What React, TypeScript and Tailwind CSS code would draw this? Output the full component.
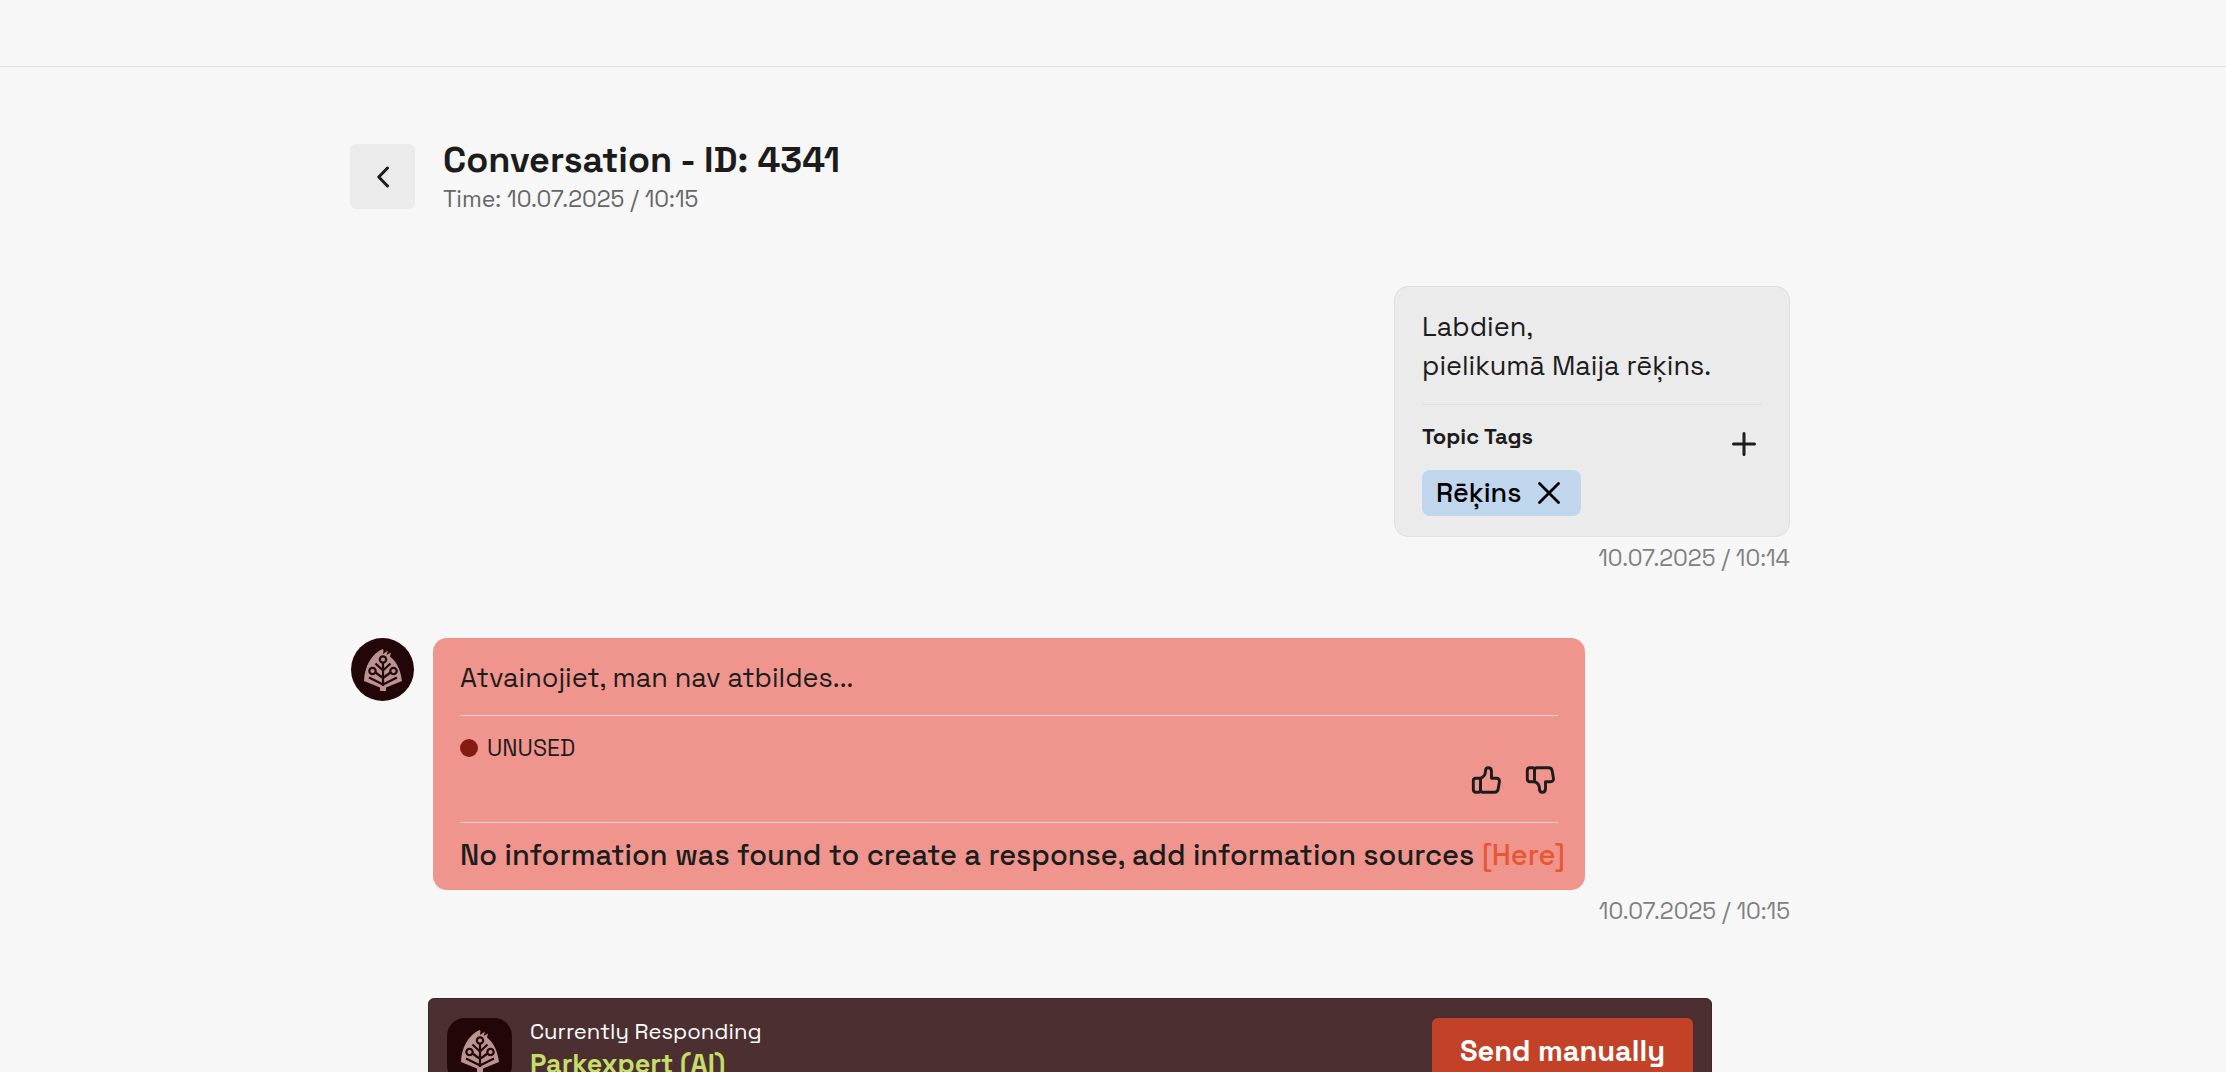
import type { ReactNode } from "react";

const messages = {
    question: {
        lines: ["Labdien,", "pielikumā Maija rēķins."],
        tags: ["Rēķins"],
        time: "10.07.2025 / 10:14",
    },
    answer: {
        text: "Atvainojiet, man nav atbildes...",
        status: "UNUSED",
        time: "10.07.2025 / 10:15",
    },
};

function LeafLogo() {
    return (
        <svg viewBox="0 0 38 42" className="h-[42px] w-[38px]" fill="none" aria-hidden="true">
            <path
                d="M18.500 0 19.500 1 19 5 24 1.500 22.500 6 27 3.500 26 7.500C33 13 36.500 21 38 32L22 38.500V42H16V38.500L0 32C0.500 18 7 5 18.500 0Z"
                fill="#bb9492"
            />
            <g stroke="#230708" strokeWidth="2.200">
                <circle cx="19" cy="10.500" r="3.200" />
                <circle cx="8.500" cy="22" r="3.200" />
                <circle cx="29.500" cy="22" r="3.200" />
                <path d="M19 14V37M19 21.500 11.500 14.500M19 21.500 26.500 14.500M19 29 11.500 23.500M19 29 26.500 23.500M19 35.500 5 28.500M19 35.500 33 28.500" />
            </g>
        </svg>
    );
}

function ThumbIcon({ down = false }: { down?: boolean }) {
    return (
        <svg
            viewBox="0 0 30 28"
            className={down ? "h-7 w-[30px] -scale-y-100" : "h-7 w-[30px]"}
            fill="none"
            stroke="currentColor"
            strokeWidth="2.900"
            strokeLinecap="round"
            strokeLinejoin="round"
            aria-hidden="true"
        >
            <path d="M9.500 12.300H5C3.200 12.300 2.300 13.200 2.300 15V23.500C2.300 25.300 3.200 26.200 5 26.200H7.500C8.800 26.200 9.500 25.300 9.500 24V12.300Z" />
            <path d="M9.500 12.300C13 11 14.500 8.500 14.500 5C14.500 3 15.500 1.700 17.200 1.700C19.400 1.700 20.500 3.300 20.500 5.500V12.300H25.500C27.500 12.300 28.700 13.700 28.400 15.700L27.200 23C26.800 25.200 25.500 26.200 23.500 26.200H12C10.500 26.200 9.500 25.300 9.500 24" />
        </svg>
    );
}

function Timestamp({ children }: { children: ReactNode }) {
    return (
        <time className="mt-[3px] block text-right text-[23px] leading-9 text-[#808080]">
            {children}
        </time>
    );
}

function ConversationHeader() {
    return (
        <div className="flex items-start gap-7">
            <button
                type="button"
                aria-label="Back"
                className="mt-1 flex size-[65px] shrink-0 items-center justify-center rounded-md bg-[#ebebeb]"
            >
                <svg viewBox="0 0 12 22" className="h-[22px] w-3" fill="none" stroke="#1c1c1c" strokeWidth="3" strokeLinecap="round" strokeLinejoin="round">
                    <path d="M10.500 2 1.800 11 10.500 20" />
                </svg>
            </button>
            <div>
                <h1 className="text-[36px] leading-10 font-bold">Conversation - ID: 4341</h1>
                <p className="text-[23px] leading-[38px] text-[#666666]">Time: 10.07.2025 / 10:15</p>
            </div>
        </div>
    );
}

function Question() {
    const { lines, tags, time } = messages.question;
    return (
        <section className="ml-auto w-[396px]">
            <div className="rounded-[14px] border border-[#e0e0e0] bg-[#ebebeb] px-[27px] py-5">
                <div className="border-b border-[#e0e0e0] pb-[19px] text-[27px] leading-[39px]">
                    {lines.map((line) => (
                        <p key={line}>{line}</p>
                    ))}
                </div>
                <div className="flex items-start justify-between pt-[15px]">
                    <h2 className="text-[22px] leading-8 font-bold">Topic Tags</h2>
                    <button type="button" aria-label="Add tag" className="mt-1.5 p-1.5">
                        <svg viewBox="0 0 24 24" className="size-6" stroke="#1c1c1c" strokeWidth="3" strokeLinecap="round">
                            <path d="M12 1.500V22.500M1.500 12H22.500" />
                        </svg>
                    </button>
                </div>
                <div className="mt-2 flex gap-2">
                    {tags.map((tag) => (
                        <span key={tag} className="flex h-[46px] items-center gap-[17px] rounded-lg bg-[#c0d6ed] pr-[21px] pl-[14px] text-[27px] font-medium text-black">
                            {tag}
                            <button type="button" aria-label={`Remove ${tag}`}>
                                <svg viewBox="0 0 22 22" className="size-[22px]" stroke="currentColor" strokeWidth="2.800" strokeLinecap="round">
                                    <path d="M1.500 1.500 20.500 20.500M20.500 1.500 1.500 20.500" />
                                </svg>
                            </button>
                        </span>
                    ))}
                </div>
            </div>
            <Timestamp>{time}</Timestamp>
        </section>
    );
}

function Answer() {
    const { text, status, time } = messages.answer;
    return (
        <section>
            <div className="flex items-start gap-[18px]">
                <div className="flex w-[65px] shrink-0 justify-center">
                    <div className="flex size-[63px] items-center justify-center rounded-full bg-[#230708]">
                        <LeafLogo />
                    </div>
                </div>
                <div className="w-4/5 rounded-[14px] bg-[#f0958d] px-[27px] pt-5 pb-[15px]">
                    <p className="pb-[18px] text-[27px] leading-[39px]">{text}</p>
                    <div className="border-y border-[#ecd5d4] pt-[14px] pb-7">
                        <p className="flex items-center gap-[9px] text-[23px] leading-9">
                            <span className="size-[18px] rounded-full bg-[#861b14]" />
                            {status}
                        </p>
                        <div className="flex justify-end gap-6 pr-[3px]">
                            <button type="button" aria-label="Good answer">
                                <ThumbIcon />
                            </button>
                            <button type="button" aria-label="Bad answer">
                                <ThumbIcon down />
                            </button>
                        </div>
                    </div>
                    <p className="pt-3 text-[29px] leading-10 font-medium whitespace-nowrap">
                        No information was found to create a response, add information sources{" "}
                        <a href="#sources" className="text-[#e65732]">
                            [Here]
                        </a>
                    </p>
                </div>
            </div>
            <Timestamp>{time}</Timestamp>
        </section>
    );
}

function RespondingBar() {
    return (
        <div className="mx-[78px] flex items-start rounded-md border border-[#3d2425] bg-[#4c3031] px-[18px] py-[19px] text-white">
            <div className="flex size-[65px] shrink-0 items-center justify-center rounded-[18px] bg-[#230708]">
                <LeafLogo />
            </div>
            <div className="ml-[18px]">
                <p className="text-[22px] leading-[26px]">Currently Responding</p>
                <p className="text-[27px] leading-10 font-bold text-[#c5dd6a]">Parkexpert (AI)</p>
            </div>
            <button type="button" className="ml-auto h-[66px] w-[261px] rounded-md bg-[#c34126] text-[29px] font-bold">
                Send manually
            </button>
        </div>
    );
}

export default function App() {
    return (
        <div className="flex h-screen flex-col overflow-hidden bg-[#f7f7f7] font-['Space_Grotesk','Inter',sans-serif] text-[#1c1c1c]">
            <header className="h-[67px] shrink-0 border-b border-[#e0e0e0]" />
            <div className="pt-[73px] pr-[86px]">
                <main className="mx-auto max-w-[1440px]">
                    <ConversationHeader />
                    <div className="mt-[68px] mb-[69px] space-y-[62px]">
                        <Question />
                        <Answer />
                    </div>
                    <RespondingBar />
                </main>
            </div>
        </div>
    );
}
